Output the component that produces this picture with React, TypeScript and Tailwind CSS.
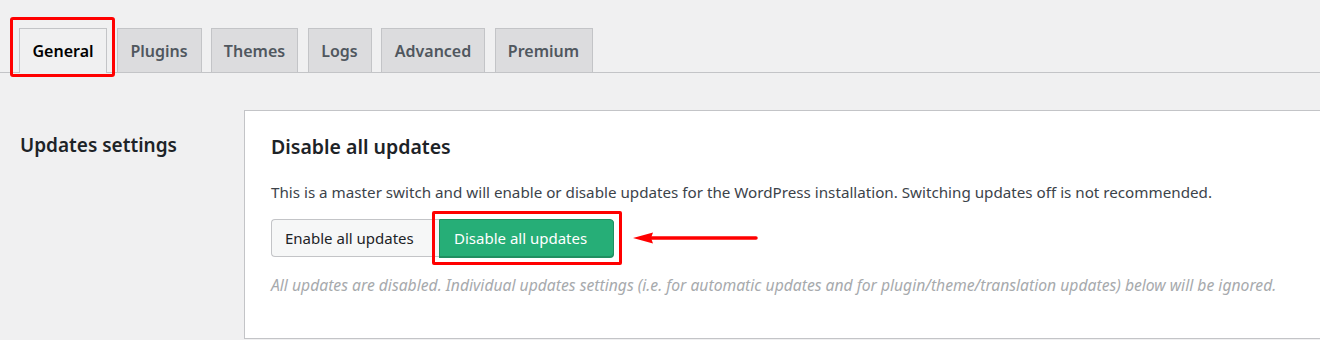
import React from "react";

const tabs = [
  { label: "General", w: "w-[88px]" },
  { label: "Plugins", w: "w-[85px]" },
  { label: "Themes", w: "w-[87px]" },
  { label: "Logs", w: "w-[64px]" },
  { label: "Advanced", w: "w-[104px]" },
  { label: "Premium", w: "w-[98px]" },
];

const font = { fontFamily: '"Noto Sans", "Open Sans", Arial, sans-serif' };

function Tab({ label, w, active }: { label: string; w: string; active: boolean }) {
  if (active) {
    return (
      <div className={`relative -mb-px ${w}`}>
        <div className="h-[45px] flex items-center justify-center border border-b-0 border-[#c3c4c7] bg-[#f0f0f1] text-[16px] font-semibold text-black">
          {label}
        </div>
        {/* red highlight */}
        <div className="absolute -left-[9px] -right-[8px] -top-[11px] -bottom-[4px] border-[3px] border-[#ff0000] rounded-[3px] pointer-events-none" />
      </div>
    );
  }
  return (
    <div
      className={`${w} h-[44px] flex items-center justify-center border border-b-0 border-[#c3c4c7] bg-[#dcdcde] text-[16px] font-semibold text-[#50575e]`}
    >
      {label}
    </div>
  );
}

export default function App() {
  return (
    <div className="w-[1320px] h-[340px] overflow-hidden bg-[#f0f0f1]" style={font}>
      {/* Tabs */}
      <div className="pt-[28px] pl-[19px] flex items-end gap-[9.5px] border-b border-[#c3c4c7]">
        {tabs.map((t) => (
          <Tab key={t.label} label={t.label} w={t.w} active={t.label === "General"} />
        ))}
      </div>

      {/* Settings body */}
      <div className="flex pt-[37px]">
        <div className="w-[244px] shrink-0 pl-[20px] pt-[22px]">
          <h2 className="text-[19px] font-semibold text-[#1d2327] leading-[26px]">
            Updates settings
          </h2>
        </div>
        <div className="flex-1 bg-white border border-r-0 border-[#c3c4c7] pl-[26px] pt-[22px] h-[229px]">
          <h3 className="text-[19.5px] font-semibold text-[#1d2327] leading-[28px]">
            Disable all updates
          </h3>
          <p className="mt-[20px] text-[15.2px] text-[#3c434a] leading-[22px]">
            This is a master switch and will enable or disable updates for the WordPress installation. Switching updates off is not recommended.
          </p>
          <div className="mt-[16px] flex items-center">
            <button className="w-[168px] h-[38px] pl-[13px] text-left bg-[#f6f7f7] border border-r-0 border-[#c3c4c7] rounded-l-[4px] text-[15px] text-[#1d2327]">
              Enable all updates
            </button>
            <div className="relative">
              <button className="w-[175px] h-[38px] pl-[14px] text-left bg-[#26ae77] border border-[#1f8f61] rounded-r-[4px] text-[15px] text-white shadow-[0_1px_0_#1f8f61]">
                Disable all updates
              </button>
              <div className="absolute -left-[7px] -right-[8px] -top-[8px] -bottom-[8px] border-[3px] border-[#ff0000] rounded-[2px] pointer-events-none" />
            </div>
            <svg className="ml-[19px]" width="126" height="14" viewBox="0 0 126 14">
              <path d="M0 7 L20 1.5 L18 7 L20 12.5 Z" fill="#ff0000" />
              <line x1="17" y1="7" x2="123" y2="7" stroke="#ff0000" strokeWidth="3.5" strokeLinecap="round" />
            </svg>
          </div>
          <p className="mt-[17px] text-[15.7px] italic text-[#a7aaad] leading-[22px]">
            All updates are disabled. Individual updates settings (i.e. for automatic updates and for plugin/theme/translation updates) below will be ignored.
          </p>
        </div>
      </div>
    </div>
  );
}
